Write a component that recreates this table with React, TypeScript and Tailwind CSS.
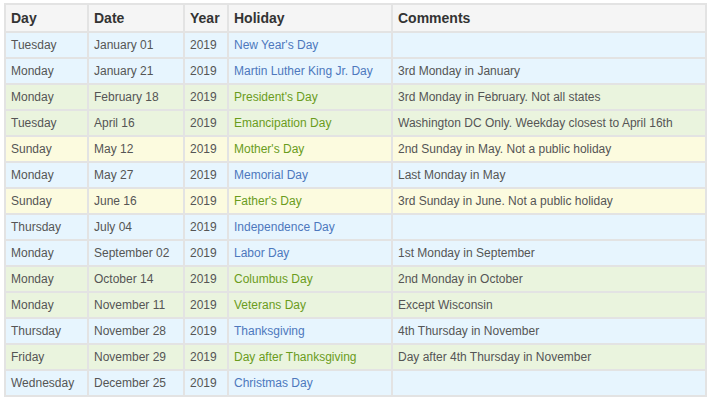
type Tone = 'blue' | 'green' | 'yellow';

interface Holiday {
  day: string;
  date: string;
  name: string;
  comment: string;
  tone: Tone;
}

const holidays: Holiday[] = [
  { day: 'Tuesday', date: 'January 01', name: "New Year's Day", comment: '', tone: 'blue' },
  { day: 'Monday', date: 'January 21', name: 'Martin Luther King Jr. Day', comment: '3rd Monday in January', tone: 'blue' },
  { day: 'Monday', date: 'February 18', name: "President's Day", comment: '3rd Monday in February. Not all states', tone: 'green' },
  { day: 'Tuesday', date: 'April 16', name: 'Emancipation Day', comment: 'Washington DC Only. Weekday closest to April 16th', tone: 'green' },
  { day: 'Sunday', date: 'May 12', name: "Mother's Day", comment: '2nd Sunday in May. Not a public holiday', tone: 'yellow' },
  { day: 'Monday', date: 'May 27', name: 'Memorial Day', comment: 'Last Monday in May', tone: 'blue' },
  { day: 'Sunday', date: 'June 16', name: "Father's Day", comment: '3rd Sunday in June. Not a public holiday', tone: 'yellow' },
  { day: 'Thursday', date: 'July 04', name: 'Independence Day', comment: '', tone: 'blue' },
  { day: 'Monday', date: 'September 02', name: 'Labor Day', comment: '1st Monday in September', tone: 'blue' },
  { day: 'Monday', date: 'October 14', name: 'Columbus Day', comment: '2nd Monday in October', tone: 'green' },
  { day: 'Monday', date: 'November 11', name: 'Veterans Day', comment: 'Except Wisconsin', tone: 'green' },
  { day: 'Thursday', date: 'November 28', name: 'Thanksgiving', comment: '4th Thursday in November', tone: 'blue' },
  { day: 'Friday', date: 'November 29', name: 'Day after Thanksgiving', comment: 'Day after 4th Thursday in November', tone: 'green' },
  { day: 'Wednesday', date: 'December 25', name: 'Christmas Day', comment: '', tone: 'blue' },
];

// Row background + holiday name colour per tone
const rowBg: Record<Tone, string> = {
  blue: 'bg-[#e7f5fe]',
  green: 'bg-[#eaf4de]',
  yellow: 'bg-[#fcfbdf]',
};

const nameColor: Record<Tone, string> = {
  blue: 'text-[#4d78bd]',
  green: 'text-[#6a9c1c]',
  yellow: 'text-[#6a9c1c]',
};

const th = 'h-[28px] border-2 border-[#e3e3e3] px-[5px] text-left align-middle text-[14px] font-bold text-[#333]';
const cell = 'h-[26px] border-2 border-[#e3e3e3] px-[5px] align-middle text-[12px]';
const td = `${cell} text-[#555]`;

export default function App() {
  return (
    <div className="min-h-[401px] w-[709px] bg-white pl-[4px] pt-[3px] [font-family:'Liberation_Sans',Arial,sans-serif]">
      <table className="w-[703px] table-fixed border-collapse">
        <colgroup>
          <col className="w-[83px]" />
          <col className="w-[96px]" />
          <col className="w-[44px]" />
          <col className="w-[164px]" />
          <col />
        </colgroup>
        <thead>
          <tr className="bg-[#f5f5f5]">
            <th className={th}>Day</th>
            <th className={th}>Date</th>
            <th className={th}>Year</th>
            <th className={th}>Holiday</th>
            <th className={th}>Comments</th>
          </tr>
        </thead>
        <tbody>
          {holidays.map((h) => (
            <tr key={h.date} className={rowBg[h.tone]}>
              <td className={td}>{h.day}</td>
              <td className={td}>{h.date}</td>
              <td className={td}>2019</td>
              <td className={`${cell} ${nameColor[h.tone]}`}>{h.name}</td>
              <td className={td}>{h.comment}</td>
            </tr>
          ))}
        </tbody>
      </table>
    </div>
  );
}
